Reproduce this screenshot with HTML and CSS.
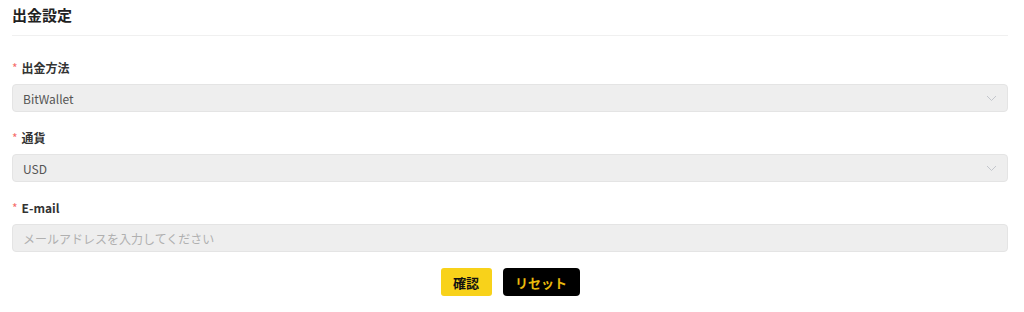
FILE: index.html
```html
<!DOCTYPE html>
<html lang="ja">
<head>
<meta charset="utf-8">
<link rel="stylesheet" href="styles.css">
</head>
<body>
<div class="page">
  <div class="header">出金設定</div>
  <form class="form">
    <div class="item">
      <div class="label"><span class="req">*</span>出金方法</div>
      <div class="field select">
        <span class="value">BitWallet</span>
        <svg class="chev" width="11" height="7" viewBox="0 0 11 7"><path d="M1 1 L5.5 5.5 L10 1" fill="none" stroke="#c3c6cc" stroke-width="1"/></svg>
      </div>
    </div>
    <div class="item">
      <div class="label"><span class="req">*</span>通貨</div>
      <div class="field select">
        <span class="value">USD</span>
        <svg class="chev" width="11" height="7" viewBox="0 0 11 7"><path d="M1 1 L5.5 5.5 L10 1" fill="none" stroke="#c3c6cc" stroke-width="1"/></svg>
      </div>
    </div>
    <div class="item">
      <div class="label"><span class="req">*</span>E-mail</div>
      <div class="field">
        <span class="placeholder">メールアドレスを入力してください</span>
      </div>
    </div>
    <div class="actions">
      <button type="button" class="btn btn-confirm">確認</button>
      <button type="button" class="btn btn-reset">リセット</button>
    </div>
  </form>
</div>
</body>
</html>
```
FILE: styles.css
```css
html, body {
  margin: 0;
  padding: 0;
  background: #ffffff;
}
body {
  font-family: "Noto Sans CJK JP", "Noto Sans", sans-serif;
  color: #333;
}
.page {
  padding: 3px 16px 0 12px;
}
.header {
  font-size: 15px;
  font-weight: 700;
  line-height: 24px;
  color: #222;
  padding-bottom: 8px;
  border-bottom: 1px solid #f0f0f0;
}
.form {
  margin-top: 22px;
}
.item {
  margin-bottom: 16px;
}
.label {
  font-size: 12px;
  font-weight: 700;
  line-height: 20px;
  color: #333;
  margin-bottom: 6px;
  display: flex;
  align-items: center;
}
.req {
  color: #f56c6c;
  font-weight: 400;
  margin-right: 4px;
  font-size: 12px;
}
.field {
  box-sizing: border-box;
  height: 28px;
  background: #eeeeee;
  border: 1px solid #e4e4e4;
  border-radius: 4px;
  padding: 0 10px 0 10px;
  display: flex;
  align-items: center;
  justify-content: space-between;
  font-size: 12px;
}
.value {
  color: #555;
}
.placeholder {
  color: #b0b0b0;
}
.actions {
  display: flex;
  justify-content: center;
  gap: 11px;
}
.btn {
  height: 28px;
  border: none;
  border-radius: 3px;
  font-family: "Noto Sans CJK JP", sans-serif;
  font-size: 13px;
  font-weight: 700;
  padding: 0;
  cursor: pointer;
}
.btn-confirm {
  width: 51px;
  background: #f8d21a;
  color: #111;
}
.btn-reset {
  width: 77px;
  background: #000;
  color: #e8b90c;
  border-radius: 4px;
}
```
